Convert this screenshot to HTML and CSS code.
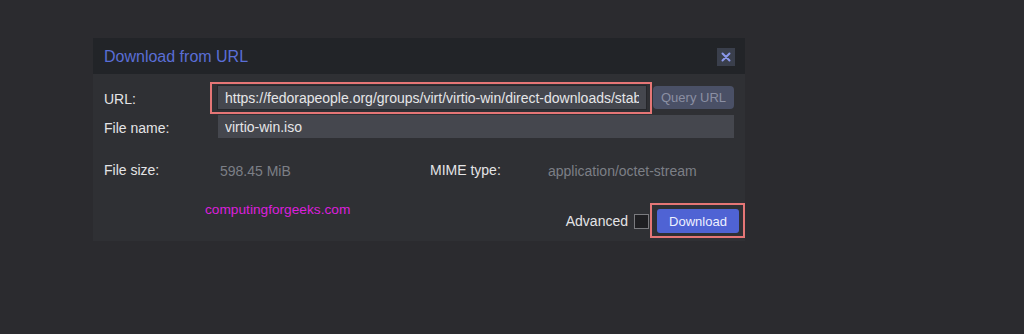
FILE: index.html
```html
<!DOCTYPE html>
<html lang="en">
<head>
    <meta charset="UTF-8">
    <title>Download from URL</title>
    <link rel="stylesheet" href="styles.css">
</head>
<body>
    <div class="dialog">
        <div class="dialog-header">
            <span class="dialog-title">Download from URL</span>
            <button class="close-btn" title="Close">
                <svg width="10" height="10" viewBox="0 0 10 10">
                    <path d="M1.5 1.5 L8.5 8.5 M8.5 1.5 L1.5 8.5" stroke="#8b97ea" stroke-width="2" stroke-linecap="round"/>
                </svg>
            </button>
        </div>

        <div class="dialog-body">
            <div class="form">
                <label class="label">URL:</label>
                <div class="url-row">
                    <div class="highlight">
                        <input class="field url-field" type="text" value="https://fedorapeople.org/groups/virt/virtio-win/direct-downloads/stable-virtio/virtio-win.iso">
                    </div>
                    <button class="query-btn">Query URL</button>
                </div>

                <label class="label">File name:</label>
                <input class="field" type="text" value="virtio-win.iso">
            </div>

            <div class="info">
                <span class="label">File size:</span>
                <span class="value">598.45 MiB</span>
                <span class="label">MIME type:</span>
                <span class="value">application/octet-stream</span>
            </div>

            <div class="footer">
                <span class="watermark">computingforgeeks.com</span>
                <div class="actions">
                    <span class="label">Advanced</span>
                    <span class="checkbox"></span>
                    <div class="highlight btn-highlight">
                        <button class="download-btn">Download</button>
                    </div>
                </div>
            </div>
        </div>
    </div>
</body>
</html>
```

FILE: styles.css
```css
body {
    margin: 0;
    background-color: #2b2b2f;
    font-family: "Liberation Sans", Arial, sans-serif;
    height: 334px;
    overflow: hidden;
}
.dialog {
    width: 652px;
    margin: 38px 0 0 93px;
    background-color: #2f3034;
}
.dialog-header {
    height: 36px;
    display: flex;
    align-items: center;
    justify-content: space-between;
    padding: 0 10px 0 11px;
    background-color: #222428;
}
.dialog-title {
    color: #5a6ed6;
    font-size: 16px;
    margin-top: 1px;
}
.close-btn {
    width: 18px;
    height: 18px;
    padding: 0;
    border: none;
    background-color: #3a3f4c;
    display: flex;
    align-items: center;
    justify-content: center;
    margin-top: 1px;
}
.dialog-body {
    padding: 12px 11px 8px 11px;
}
.form {
    display: grid;
    grid-template-columns: 114px 1fr;
    row-gap: 6px;
    align-items: center;
}
.label {
    color: #e4e4e6;
    font-size: 14px;
}
.form .label {
    margin-top: 2px;
}
.url-row {
    display: flex;
    gap: 7px;
}
.highlight {
    position: relative;
    flex: 1;
    display: flex;
}
.highlight::after {
    content: "";
    position: absolute;
    top: -4px;
    left: -8px;
    right: -6px;
    bottom: -5px;
    border: 2px solid #e57676;
    pointer-events: none;
}
.field {
    flex: 1;
    min-width: 0;
    height: 23px;
    box-sizing: border-box;
    border: none;
    padding: 0 7px;
    background-color: #45474e;
    color: #e6e6e8;
    font-family: "Liberation Sans", Arial, sans-serif;
    font-size: 14px;
    outline: none;
}
.url-field {
    box-shadow: 0 0 0 1px #26272b;
}
.query-btn {
    width: 81px;
    height: 23px;
    border: none;
    border-radius: 4px;
    background-color: #4a5066;
    color: #8b8fa3;
    font-family: "Liberation Sans", Arial, sans-serif;
    font-size: 13px;
    padding: 0;
}
.info {
    display: grid;
    grid-template-columns: 114px 212px 116px 1fr;
    align-items: center;
    margin-top: 22px;
}
.value {
    color: #7c7f86;
    font-size: 14px;
    padding-left: 2px;
    margin-top: 3px;
}
.footer {
    display: flex;
    justify-content: space-between;
    align-items: flex-start;
    margin-top: 16px;
    margin-right: -5px;
}
.watermark {
    color: #dc1fdc;
    font-size: 13.7px;
    margin-left: 101px;
    margin-top: 7px;
}
.actions {
    display: flex;
    align-items: center;
    padding-top: 14px;
}
.checkbox {
    width: 13px;
    height: 13px;
    border: 1px solid #7a7a7e;
    background-color: #1f1f22;
    margin: 0 0 0 6px;
}
.btn-highlight {
    flex: none;
    margin-left: 8px;
}
.btn-highlight::after {
    top: -6px;
    left: -7px;
    right: -6px;
    bottom: -5px;
}
.download-btn {
    width: 82px;
    height: 24px;
    border: none;
    border-radius: 3px;
    background-color: #4f63d4;
    color: #eef0ff;
    font-family: "Liberation Sans", Arial, sans-serif;
    font-size: 13px;
    padding: 0;
}
```
